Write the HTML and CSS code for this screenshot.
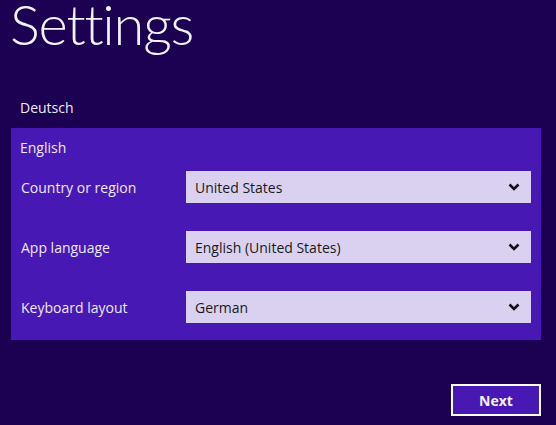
FILE: index.html
```html
<!DOCTYPE html>
<html lang="en">
<head>
<meta charset="utf-8">
<title>Settings</title>
<link rel="stylesheet" href="styles.css">
</head>
<body>
<div class="page">
  <div class="title-wrap"><h1 class="title">Settings</h1></div>
  <div class="lang">Deutsch</div>
  <section class="panel">
    <div class="panel-head">English</div>
    <div class="grid">
      <div class="label">Country or region</div>
      <div class="select"><span>United States</span><svg class="chev" viewBox="0 0 12 8" width="12" height="8"><path d="M1.5 1.5 L6 6 L10.5 1.5" fill="none" stroke="#111" stroke-width="2.6"/></svg></div>
      <div class="label">App language</div>
      <div class="select"><span>English (United States)</span><svg class="chev" viewBox="0 0 12 8" width="12" height="8"><path d="M1.5 1.5 L6 6 L10.5 1.5" fill="none" stroke="#111" stroke-width="2.6"/></svg></div>
      <div class="label">Keyboard layout</div>
      <div class="select"><span>German</span><svg class="chev" viewBox="0 0 12 8" width="12" height="8"><path d="M1.5 1.5 L6 6 L10.5 1.5" fill="none" stroke="#111" stroke-width="2.6"/></svg></div>
    </div>
  </section>
  <div class="footer"><button class="next">Next</button></div>
</div>
</body>
</html>
```
FILE: styles.css
```css
html, body {
  margin: 0;
  padding: 0;
  background: #1c0052;
  height: 100%;
}
body {
  font-family: "Open Sans", "Noto Sans", sans-serif;
  color: #ece8f6;
  font-size: 14px;
}
.page {
  width: 556px;
  height: 425px;
  overflow: hidden;
}
.title-wrap {
  height: 88px;
  padding-top: 0;
  box-sizing: border-box;
}
.title {
  margin: 0;
  padding-left: 10px;
  font-family: "Lato", "Open Sans", sans-serif;
  font-weight: 300;
  font-size: 56px;
  letter-spacing: -1.2px;
  line-height: 48px;
  color: #f2f0f8;
}
.lang {
  height: 40px;
  line-height: 40px;
  padding-left: 20px;
}
.panel {
  margin-left: 11px;
  width: 530px;
  box-sizing: border-box;
  background: #4818b4;
  padding: 0 10px 17px 9px;
}
.panel-head {
  height: 43px;
  line-height: 40px;
}
.grid {
  display: grid;
  grid-template-columns: 166px 1fr;
  row-gap: 28px;
  align-items: center;
}
.label {
  padding-left: 1px;
}
.select {
  height: 32px;
  background: #d9d1ef;
  color: #1a1a1a;
  display: flex;
  align-items: center;
  justify-content: space-between;
  padding: 0 11px 0 9px;
}
.chev {
  display: block;
}
.footer {
  display: flex;
  justify-content: flex-end;
  padding: 44px 15px 0 0;
}
.next {
  width: 90px;
  height: 32px;
  box-sizing: border-box;
  border: 2px solid #ffffff;
  background: #4818b4;
  color: #f2f0f8;
  font-family: "Open Sans", "Noto Sans", sans-serif;
  font-weight: 700;
  font-size: 14px;
  padding: 0;
  margin: 0;
}
```
